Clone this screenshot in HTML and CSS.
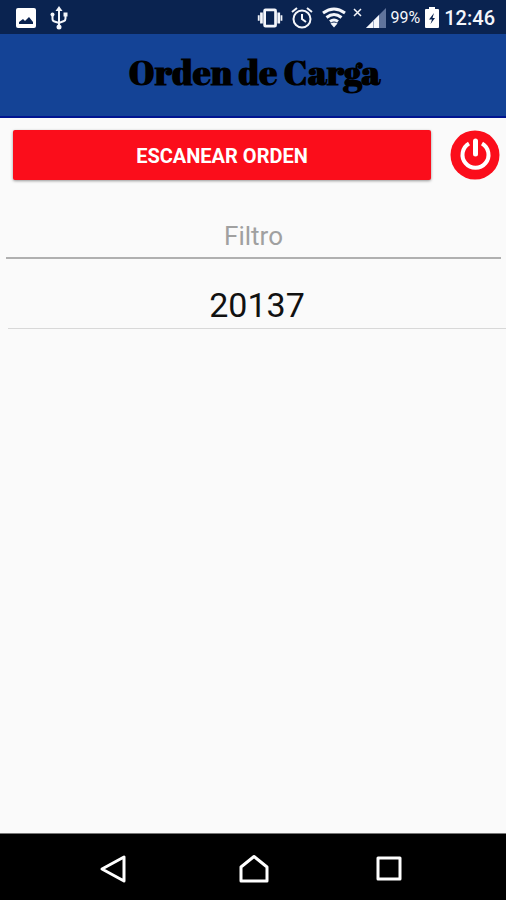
FILE: index.html
```html
<!DOCTYPE html>
<html lang="es">
<head>
<meta charset="utf-8">
<meta name="viewport" content="width=device-width, initial-scale=1">
<title>Orden de Carga</title>
<link rel="stylesheet" href="styles.css">
</head>
<body>
<div class="status">
  <div class="status-group">
    <svg width="20" height="20" viewBox="0 0 20 20"><rect width="20" height="20" rx="2" fill="#fff"/><path d="M3 16v-2l4-3 2 2 4-4 4 5v2z" fill="#0a2350"/></svg>
    <svg width="18" height="24" viewBox="0 0 18 24" fill="none" stroke="#f4f6fb" stroke-width="2"><path d="M9 4v17M2.500 9v4q0 2 2 2.500l4.500 1.500 5-2q1.500-.5 1.500-2.500V9"/><g fill="#f4f6fb" stroke="none"><path d="M9 0l3.500 5h-7z"/><circle cx="2.500" cy="8.500" r="2"/><path d="M13.500 6.500h4v4h-4z"/><circle cx="9" cy="21" r="2.500"/></g></svg>
  </div>
  <div class="status-group status-right">
    <svg width="28" height="20" viewBox="0 0 30 22" fill="none" stroke="#f4f6fb"><rect x="8" y="2" width="12" height="18" rx="1" stroke-width="3"/><path d="M4.500 5v12M23.500 5v12" stroke-width="3"/><path d="M1.500 8v6M26.500 8v6" stroke-width="2"/></svg>
    <svg width="24" height="22" viewBox="0 0 24 22" fill="none" stroke="#f4f6fb" stroke-width="2"><circle cx="12" cy="12" r="8.500"/><path d="M12 7v5l4 3M2 5l5-4M22 5l-5-4"/></svg>
    <svg width="28" height="22" viewBox="-2 0 28 22" fill="none" stroke="#f4f6fb" stroke-width="3"><path d="M2 6q11-8 22 0M5.500 10.500q7.500-6 15 0M9 14.500q4-3 8 0"/><path d="M9.500 16.500q3.500-2 7 0L13 20.500z" fill="#f4f6fb" stroke="none"/></svg>
    <svg width="34" height="22" viewBox="0 0 34 22"><path d="M2 2l7 7M9 2l-7 7" stroke="#f4f6fb" stroke-width="1.500"/><path d="M14 21L34 1v20z" fill="#60749c"/><path d="M14 21L27 8v13z" fill="#f4f6fb"/><path d="M21.500 14v7" stroke="#9baac6"/></svg>
    <span class="percent">99%</span>
    <svg width="14" height="22" viewBox="0 0 14 22"><path d="M4 0h6v2h3q1 0 1 1v17q0 1-1 1H1q-1 0-1-1V3q0-1 1-1h3z" fill="#fff"/><path d="M9 6L4 12.500h3L5.500 17 10 11H7.500z" fill="#0a2350"/></svg>
    <span class="clock">12:46</span>
  </div>
</div>
<header class="header"><h1>Orden de Carga</h1></header>
<main class="content">
  <div class="actions">
    <button class="scan" type="button">ESCANEAR ORDEN</button>
    <button class="power" type="button" aria-label="Salir">
      <svg width="50" height="50" viewBox="0 0 50 50" fill="none" stroke="#fff" stroke-width="4"><circle cx="25" cy="25" r="24.500" fill="#fb0d1b" stroke="none"/><path d="M19 13.500a13 13 0 1 0 13 0"/><path d="M25.500 11v13" stroke-width="5" stroke-linecap="round"/></svg>
    </button>
  </div>
  <input class="filter" type="text" placeholder="Filtro" aria-label="Filtro">
  <ul class="orders"><li>20137</li></ul>
</main>
<nav class="nav">
  <button type="button" aria-label="Atrás"><svg width="30" height="30" viewBox="0 0 30 30"><path d="M26 3v24L4 15z"/></svg></button>
  <button type="button" aria-label="Inicio"><svg width="30" height="30" viewBox="0 0 30 30"><path d="M18 2.500L31 13v14H5V13z"/></svg></button>
  <button type="button" aria-label="Recientes"><svg width="30" height="30" viewBox="0 0 30 30"><rect x="4" y="4" width="22" height="21"/></svg></button>
</nav>
</body>
</html>
```
FILE: styles.css
```css
* { box-sizing: border-box; }
body {
  margin: 0;
  min-height: 100vh;
  display: flex;
  flex-direction: column;
  background: #fafafa;
  font-family: Roboto, "Liberation Sans", sans-serif;
}
svg { display: block; flex: none; overflow: visible; }
button { border: 0; padding: 0; background: none; font: inherit; }
.status {
  height: 34px;
  display: flex;
  align-items: center;
  justify-content: space-between;
  padding: 1px 11px 0 16px;
  background: #0a2350;
  color: #f4f6fb;
}
.status-group { display: flex; align-items: center; gap: 14px; }
.status-right { gap: 5px; }
.percent { font-size: 16px; }
.clock { font-size: 20px; font-weight: 500; }
.header {
  height: 84px;
  padding: 16px 0 0 3px;
  background: #144396;
  border-bottom: 2px solid #001590;
  text-align: center;
}
.header h1 {
  margin: 0;
  font: bold 35px/44px "Abril Fatface", "Liberation Serif", serif;
  color: #000;
}
.content { flex: 1; }
.actions {
  display: flex;
  align-items: center;
  gap: 19px;
  padding: 12px 6px 0 13px;
}
.scan {
  flex: 1;
  height: 50px;
  padding-top: 2px;
  border-radius: 2px;
  background: #fb0d1b;
  box-shadow: 0 1px 3px rgba(0, 0, 0, .4);
  color: #fff;
  font-size: 20px;
  font-weight: 700;
}
.power { border-radius: 50%; }
.filter {
  display: block;
  width: calc(100% - 11px);
  height: 48px;
  margin: 31px 5px 0 6px;
  padding: 4px 0 0;
  border: 0;
  border-bottom: 2px solid #b0b0b0;
  background: none;
  font: 26px Roboto, "Liberation Sans", sans-serif;
  text-align: center;
  outline: 0;
}
.filter::placeholder { color: #a0a0a0; opacity: 1; }
.orders { list-style: none; margin: 24px 0 0 8px; padding: 0; }
.orders li {
  height: 46px;
  border-bottom: 1px solid #d8d8d8;
  font-size: 34px;
  line-height: 44px;
  text-align: center;
  color: #111;
}
.nav {
  height: 67px;
  display: flex;
  align-items: center;
  justify-content: center;
  gap: 108px;
  padding-top: 4px;
  padding-right: 4px;
  border-top: 1px solid #777;
  background: #000;
}
.nav svg { fill: none; stroke: #fff; stroke-width: 3; stroke-linejoin: round; }
```
